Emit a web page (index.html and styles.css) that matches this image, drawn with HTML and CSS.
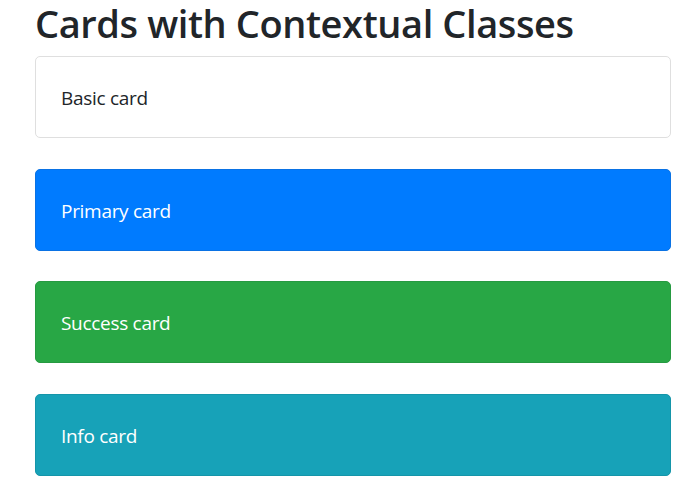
FILE: index.html
```html
<!DOCTYPE html>
<html lang="en">
<head>
<meta charset="utf-8">
<title>Cards with Contextual Classes</title>
<link rel="stylesheet" href="styles.css">
</head>
<body>
<div class="container">
  <h2 class="title">Cards with Contextual Classes</h2>
  <div class="card"><div class="card-body">Basic card</div></div>
  <div class="card card-primary"><div class="card-body">Primary card</div></div>
  <div class="card card-success"><div class="card-body">Success card</div></div>
  <div class="card card-info"><div class="card-body">Info card</div></div>
</div>
</body>
</html>
```

FILE: styles.css
```css
html, body {
  margin: 0;
  padding: 0;
  background: #ffffff;
}

body {
  font-family: "Open Sans", "Noto Sans", sans-serif;
  color: #212529;
  font-size: 19px;
}

.container {
  padding: 1px 25px 0 35px;
}

.title {
  margin: 0 0 11px 0;
  font-size: 38px;
  line-height: 44px;
  font-weight: 600;
  letter-spacing: -0.4px;
  color: #212529;
}

.card {
  border: 1px solid #dfdfdf;
  border-radius: 5px;
  background: #ffffff;
  margin-bottom: 30.5px;
}

.card-body {
  padding: 26px 25px 24px 25px;
  line-height: 30px;
  letter-spacing: -0.3px;
}

.card-primary {
  background: #007bff;
  border-color: #0a72e4;
  color: #ffffff;
}

.card-success {
  background: #28a745;
  border-color: #269a41;
  color: #ffffff;
}

.card-info {
  background: #17a2b8;
  border-color: #1595a9;
  color: #ffffff;
}
```
